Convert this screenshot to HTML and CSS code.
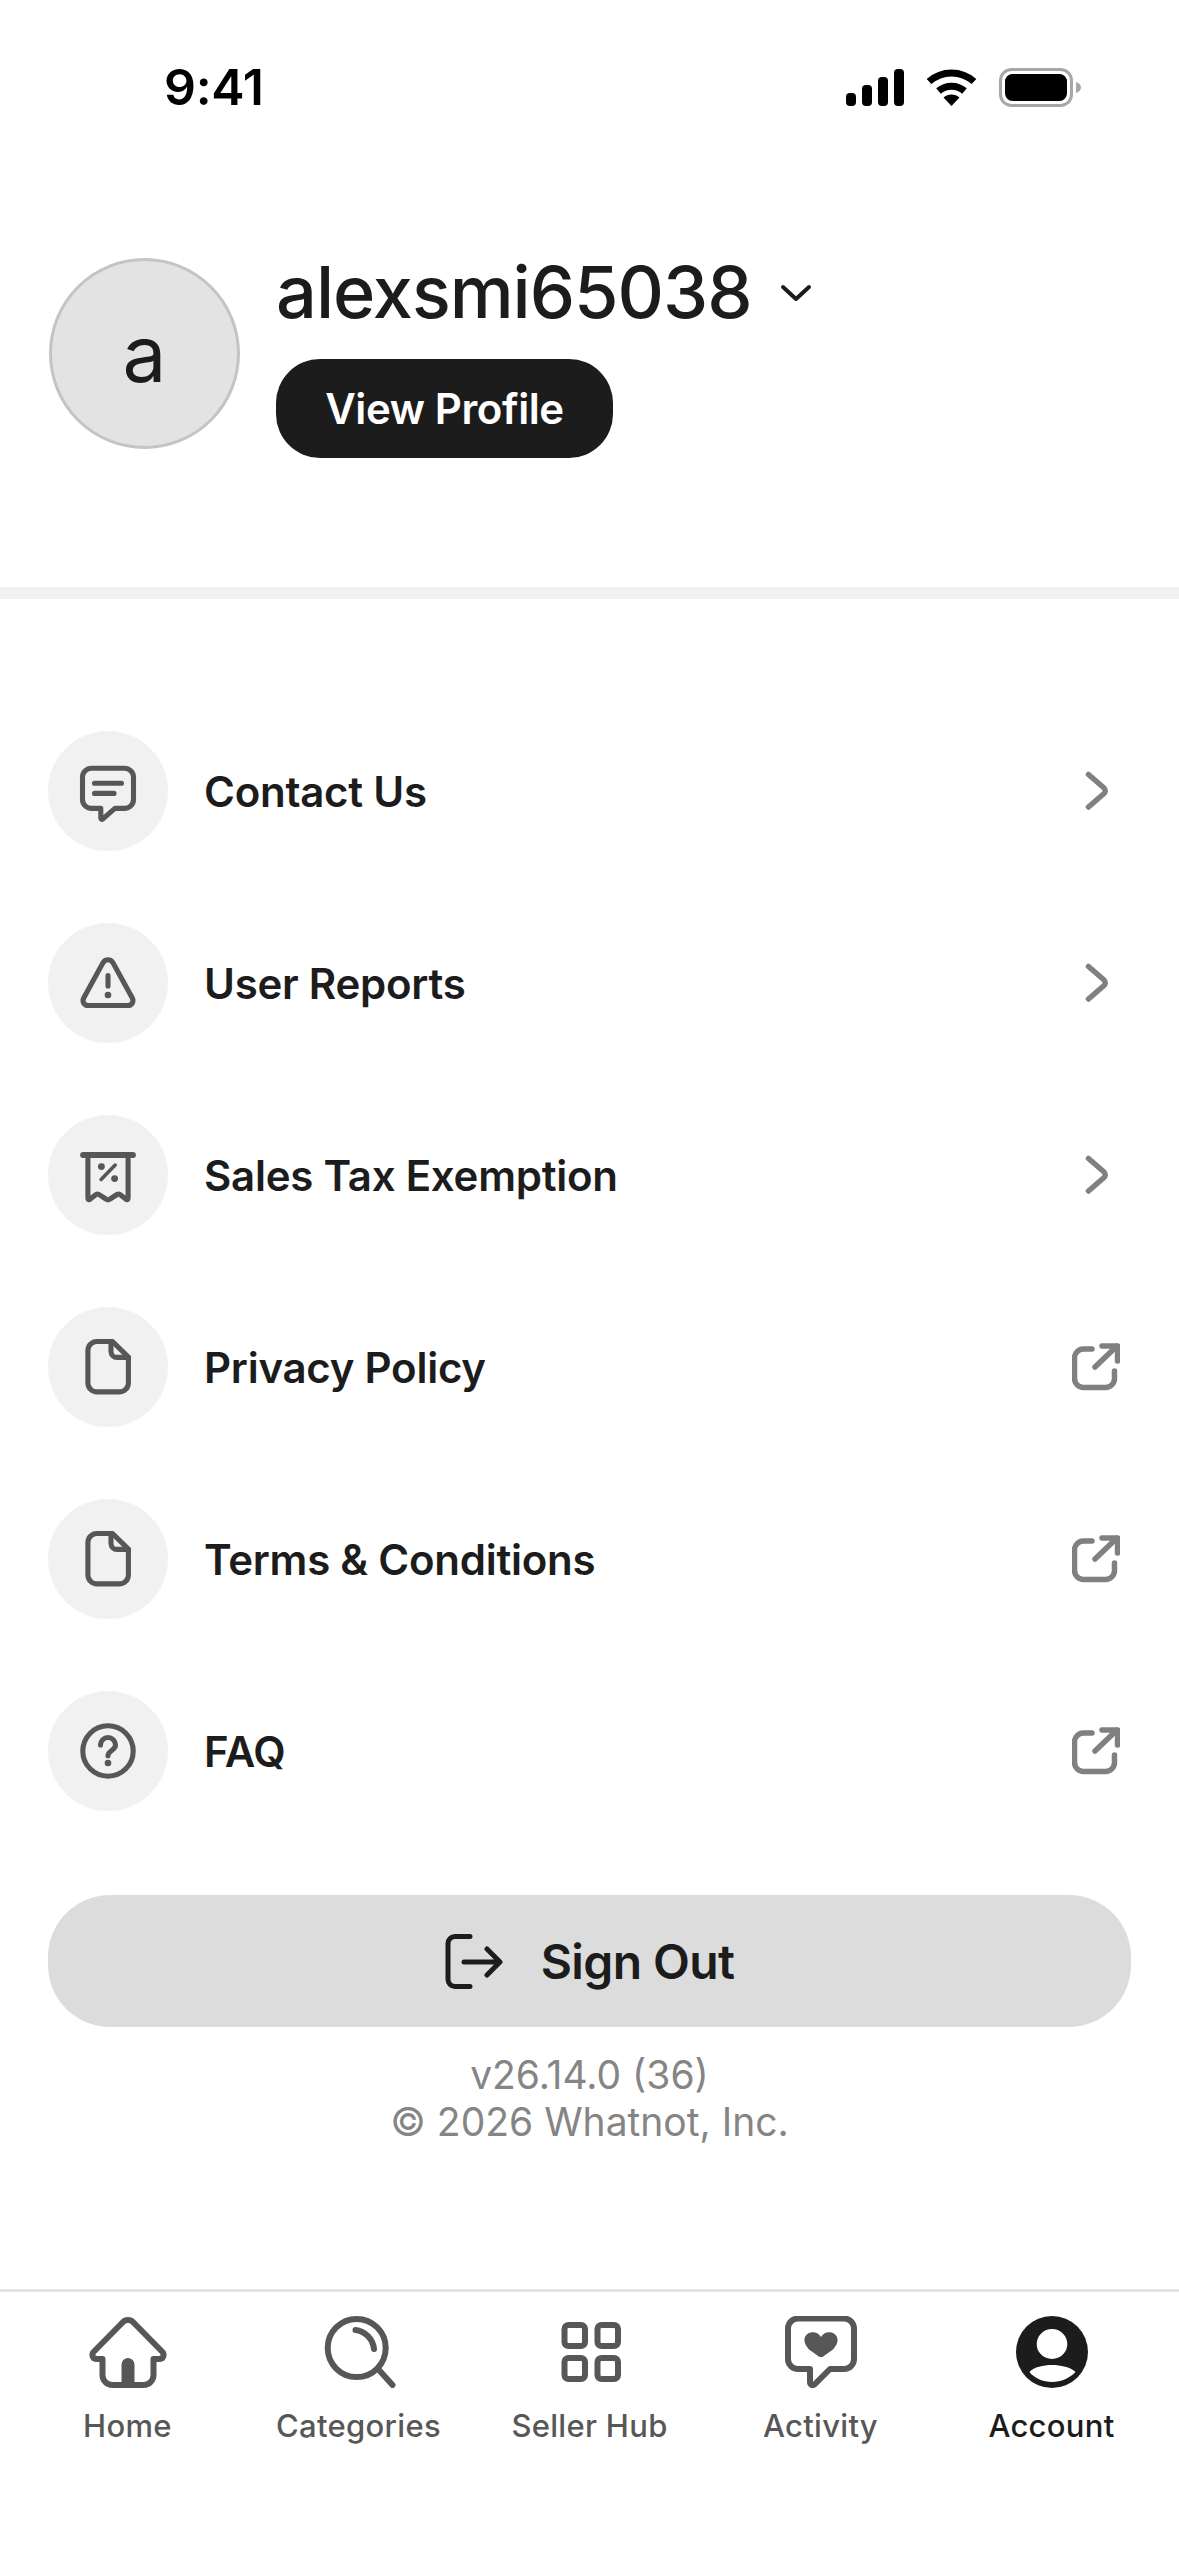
FILE: index.html
```html
<!DOCTYPE html>
<html lang="en">
<head>
    <meta charset="UTF-8">
    <meta name="viewport" content="width=device-width, initial-scale=1.0">
    <title>Account</title>
    <link rel="stylesheet" href="styles.css">
</head>
<body>
    <div class="page">
        <!-- Status bar -->
        <header class="status-bar">
            <span class="time">9:41</span>
            <div class="status-icons">
                <svg class="signal" viewBox="0 0 58 37" fill="#000">
                    <rect x="0" y="24" width="10" height="13" rx="4"/>
                    <rect x="16" y="16" width="10" height="21" rx="4"/>
                    <rect x="32" y="8" width="10" height="29" rx="4"/>
                    <rect x="48" y="0" width="10" height="37" rx="4"/>
                </svg>
                <svg class="wifi" viewBox="0 0 51 38" fill="none" stroke="#000">
                    <path d="M3 13.5C16 2 35 2 48 13.5" stroke-width="7"/>
                    <path d="M12.5 23C20 16.5 31 16.5 38.500 23" stroke-width="7"/>
                    <path d="M17.500 29.500C22 25.500 29 25.500 33.500 29.500L25.500 38Z" fill="#000" stroke="none"/>
                </svg>
                <svg class="battery" viewBox="0 0 82 39" fill="none">
                    <rect x="1.500" y="1.500" width="71" height="36" rx="11" stroke="#a6a6a6" stroke-width="3"/>
                    <rect x="6" y="6" width="62" height="27" rx="7.500" fill="#000"/>
                    <path d="M77 14C80 15 82 17 82 19.500C82 22 80 24 77 25Z" fill="#a6a6a6"/>
                </svg>
            </div>
        </header>

        <!-- Profile -->
        <section class="profile">
            <div class="avatar">a</div>
            <div class="profile-info">
                <div class="username">
                    <span>alexsmi65038</span>
                    <svg class="caret" viewBox="0 0 32 18" fill="none" stroke="#1c1c1c" stroke-width="4" stroke-linecap="round" stroke-linejoin="round">
                        <path d="M3 3L16 15L29 3"/>
                    </svg>
                </div>
                <button class="view-profile">View Profile</button>
            </div>
        </section>

        <div class="divider"></div>

        <!-- Menu -->
        <ul class="menu">
            <li class="menu-row">
                <span class="menu-icon">
                    <svg viewBox="0 0 24 24">
                        <path d="M6.500 4.400H17.500A3 3 0 0 1 20.500 7.400V14.800A3 3 0 0 1 17.500 17.800H14.300L10.300 21.300C9.900 21.600 9.600 21.400 9.600 21V17.800H6.500A3 3 0 0 1 3.500 14.800V7.400A3 3 0 0 1 6.500 4.400Z"/>
                        <path d="M7.500 9.400H16.500M7.500 12.800H14"/>
                    </svg>
                </span>
                <span class="menu-label">Contact Us</span>
                <span class="menu-end">
                    <svg viewBox="0 0 48 48"><path d="M16.500 7.500L31.500 20.500Q35 24 31.500 27L16.500 40"/></svg>
                </span>
            </li>
            <li class="menu-row">
                <span class="menu-icon">
                    <svg viewBox="0 0 24 24">
                        <path d="M10.300 5.300C11.100 3.900 12.900 3.900 13.700 5.300L20.100 17C20.700 18.200 20 19.500 18.600 19.500H5.400C4 19.500 3.300 18.200 3.900 17Z"/>
                        <path d="M12 9.500V13"/>
                        <circle class="dot" cx="12" cy="16" r="1.100"/>
                    </svg>
                </span>
                <span class="menu-label">User Reports</span>
                <span class="menu-end">
                    <svg viewBox="0 0 48 48"><path d="M16.500 7.500L31.500 20.500Q35 24 31.500 27L16.500 40"/></svg>
                </span>
            </li>
            <li class="menu-row">
                <span class="menu-icon">
                    <svg viewBox="0 0 24 24">
                        <path class="bar" d="M3.700 5.300H20.300"/>
                        <path d="M5.300 5.300V19.800C5.300 20.200 5.700 20.300 6 20.100L8 18.500C8.300 18.300 8.700 18.300 9 18.500L11.300 20C11.700 20.300 12.300 20.300 12.700 20L15 18.500C15.300 18.300 15.700 18.300 16 18.500L18 20.100C18.300 20.300 18.700 20.200 18.700 19.800V5.300"/>
                        <path class="thin" d="M9.700 13.500L14.400 8.700"/>
                        <circle class="dot" cx="9.800" cy="9.200" r="1.150"/>
                        <circle class="dot" cx="14.200" cy="13.200" r="1.150"/>
                    </svg>
                </span>
                <span class="menu-label">Sales Tax Exemption</span>
                <span class="menu-end">
                    <svg viewBox="0 0 48 48"><path d="M16.500 7.500L31.500 20.500Q35 24 31.500 27L16.500 40"/></svg>
                </span>
            </li>
            <li class="menu-row">
                <span class="menu-icon">
                    <svg viewBox="0 0 24 24">
                        <path d="M8.300 3.500H13.500L18.800 8.700V17.300A3 3 0 0 1 15.800 20.300H8.300A3 3 0 0 1 5.300 17.300V6.500A3 3 0 0 1 8.300 3.500Z"/>
                        <path d="M13 3.600V6.800A2 2 0 0 0 15 8.800H18.800"/>
                    </svg>
                </span>
                <span class="menu-label">Privacy Policy</span>
                <span class="menu-end">
                    <svg viewBox="0 0 48 48"><path d="M20 6H11.500A9 9 0 0 0 2.500 15V35.500A9 9 0 0 0 11.500 44.500H33.500A9 9 0 0 0 42.500 35.500V28"/><path d="M23 24L45 3M30 3H45.500V18"/></svg>
                </span>
            </li>
            <li class="menu-row">
                <span class="menu-icon">
                    <svg viewBox="0 0 24 24">
                        <path d="M8.300 3.500H13.500L18.800 8.700V17.300A3 3 0 0 1 15.800 20.300H8.300A3 3 0 0 1 5.300 17.300V6.500A3 3 0 0 1 8.300 3.500Z"/>
                        <path d="M13 3.600V6.800A2 2 0 0 0 15 8.800H18.800"/>
                    </svg>
                </span>
                <span class="menu-label">Terms &amp; Conditions</span>
                <span class="menu-end">
                    <svg viewBox="0 0 48 48"><path d="M20 6H11.500A9 9 0 0 0 2.500 15V35.500A9 9 0 0 0 11.500 44.500H33.500A9 9 0 0 0 42.500 35.500V28"/><path d="M23 24L45 3M30 3H45.500V18"/></svg>
                </span>
            </li>
            <li class="menu-row">
                <span class="menu-icon">
                    <svg viewBox="0 0 24 24">
                        <circle cx="12" cy="12" r="8.400"/>
                        <path d="M9.500 10A2.500 2.500 0 0 1 14.500 10C14.500 11.800 12 11.900 12 13.600"/>
                        <circle class="dot" cx="12" cy="16" r="1.100"/>
                    </svg>
                </span>
                <span class="menu-label">FAQ</span>
                <span class="menu-end">
                    <svg viewBox="0 0 48 48"><path d="M20 6H11.500A9 9 0 0 0 2.500 15V35.500A9 9 0 0 0 11.500 44.500H33.500A9 9 0 0 0 42.500 35.500V28"/><path d="M23 24L45 3M30 3H45.500V18"/></svg>
                </span>
            </li>
        </ul>

        <button class="sign-out">
            <svg viewBox="0 0 58 55" fill="none" stroke="#1c1c1c" stroke-width="5" stroke-linecap="round" stroke-linejoin="round">
                <path d="M25 2.500H10A7 7 0 0 0 3 9.500V45.500A7 7 0 0 0 10 52.500H25"/>
                <path d="M19 28H54M42 15L55 28L42 41"/>
            </svg>
            <span>Sign Out</span>
        </button>

        <p class="version">v26.14.0 (36)<br>© 2026 Whatnot, Inc.</p>

        <!-- Tab bar -->
        <nav class="tab-bar">
            <div class="tab">
                <svg viewBox="0 0 80 72">
                    <path d="M34.500 6.500C37.500 3.200 42.500 3.200 45.500 6.500L74 35.500C77 38.500 75.500 43 71 43H65.500V59A10 10 0 0 1 55.500 69H24.500A10 10 0 0 1 14.500 59V43H9C4.500 43 3 38.500 6 35.500Z"/>
                    <path class="solid" d="M33.500 69V48.500A6.500 6.500 0 0 1 46.500 48.500V69Z"/>
                </svg>
                <span>Home</span>
            </div>
            <div class="tab">
                <svg viewBox="0 0 80 72">
                    <ellipse cx="37.700" cy="32" rx="29" ry="29"/>
                    <path d="M60 54L73.500 69"/>
                    <path d="M36.500 14C46 15 54 23 55 33"/>
                </svg>
                <span>Categories</span>
            </div>
            <div class="tab">
                <svg viewBox="0 0 80 72">
                    <rect x="14.500" y="9" width="20.500" height="21" rx="4"/>
                    <rect x="47.500" y="9" width="20.500" height="21" rx="4"/>
                    <rect x="14.500" y="42" width="20.500" height="21" rx="4"/>
                    <rect x="47.500" y="42" width="20.500" height="21" rx="4"/>
                </svg>
                <span>Seller Hub</span>
            </div>
            <div class="tab">
                <svg viewBox="0 0 80 72">
                    <path d="M17 2.500H63A10 10 0 0 1 73 12.500V43A10 10 0 0 1 63 53H49L34 68C32 70 29 69 29 66V53H17A10 10 0 0 1 7 43V12.500A10 10 0 0 1 17 2.500Z"/>
                    <path class="solid" d="M40 21C42 17.500 45.500 15.700 49.500 16.300C54 17 57 20.500 56.500 25C56.200 28 54.500 30.500 52 33.500L43.500 39.500C41.500 41.500 38.500 41.500 36.500 39.500L28 33.500C25.500 30.500 23.800 28 23.500 25C23 20.500 26 17 30.500 16.300C34.500 15.700 38 17.500 40 21Z"/>
                </svg>
                <span>Activity</span>
            </div>
            <div class="tab active">
                <svg viewBox="0 0 80 72">
                    <circle class="solid dark" cx="40" cy="36" r="36"/>
                    <ellipse class="cut" cx="40" cy="28" rx="15.300" ry="15"/>
                    <path class="cut" d="M17.500 56C22 51 31 49 40 49C49 49 58 51 63.500 56C58 62 49 66 40 66C31 66 22 62 17.500 56Z"/>
                </svg>
                <span>Account</span>
            </div>
        </nav>
    </div>
</body>
</html>
```

FILE: styles.css
```css
* {
    margin: 0;
    padding: 0;
    box-sizing: border-box;
}

body, html {
    font-family: Inter, "Noto Sans", sans-serif;
    background: #fff;
    color: #1c1c1c;
}

.page {
    height: 2556px;
    display: flex;
    flex-direction: column;
    overflow: hidden;
}

/* Status bar */
.status-bar {
    height: 174px;
    padding: 0 98px 0 164px;
    display: flex;
    align-items: center;
    justify-content: space-between;
}

.time {
    font-size: 50px;
    font-weight: 600;
    letter-spacing: -0.3px;
    color: #000;
}

.status-icons {
    display: flex;
    align-items: center;
    gap: 22px;
}

.signal {
    width: 58px;
    height: 37px;
}

.wifi {
    width: 51px;
    height: 38px;
}

.battery {
    width: 82px;
    height: 39px;
}

/* Profile */
.profile {
    padding: 75px 0 129px 49px;
    display: flex;
    align-items: center;
    gap: 36px;
}

.avatar {
    width: 191px;
    height: 191px;
    border-radius: 50%;
    background: #e3e3e3;
    border: 3px solid #c4c4c4;
    display: flex;
    align-items: center;
    justify-content: center;
    font-size: 78px;
    color: #1c1c1c;
}

.profile-info {
    display: flex;
    flex-direction: column;
    align-items: flex-start;
    gap: 24px;
}

.username {
    height: 86px;
    display: flex;
    align-items: center;
    gap: 28px;
    font-size: 72px;
    font-weight: 500;
    letter-spacing: -1px;
    line-height: 86px;
}

.caret {
    width: 32px;
    height: 18px;
    margin-top: 2px;
}

.view-profile {
    width: 337px;
    height: 99px;
    border: none;
    border-radius: 44px;
    background: #1c1c1c;
    color: #fff;
    font-family: inherit;
    font-size: 42px;
    font-weight: 600;
    letter-spacing: -0.4px;
}

.divider {
    height: 12px;
    background: #f1f1f1;
}

/* Menu */
.menu {
    list-style: none;
    padding: 132px 59px 0 48px;
    display: flex;
    flex-direction: column;
    gap: 72px;
}

.menu-row {
    height: 120px;
    display: flex;
    align-items: center;
}

.menu-icon {
    width: 120px;
    height: 120px;
    border-radius: 50%;
    background: #f1f1f1;
    display: flex;
    align-items: center;
    justify-content: center;
    margin-right: 36px;
}

.menu-icon svg {
    width: 72px;
    height: 72px;
    fill: none;
    stroke: #575757;
    stroke-width: 1.7;
    stroke-linecap: round;
    stroke-linejoin: round;
}

.menu-icon .dot {
    fill: #575757;
    stroke: none;
}

.menu-icon .thin {
    stroke-width: 1.2;
}

.menu-icon .bar {
    stroke-width: 2;
}

.menu-label {
    flex: 1;
    font-size: 42px;
    font-weight: 600;
    letter-spacing: -0.25px;
}

.menu-end {
    width: 48px;
    height: 48px;
}

.menu-end svg {
    display: block;
    width: 48px;
    height: 48px;
    fill: none;
    stroke: #808080;
    stroke-width: 5.5;
    stroke-linecap: round;
    stroke-linejoin: round;
}

/* Sign out */
.sign-out {
    margin: 84px 48px 0;
    height: 132px;
    border: none;
    border-radius: 62px;
    background: #dcdcdc;
    color: #1c1c1c;
    font-family: inherit;
    font-size: 48px;
    font-weight: 600;
    letter-spacing: -0.6px;
    display: flex;
    align-items: center;
    justify-content: center;
    gap: 38px;
}

.sign-out svg {
    width: 58px;
    height: 55px;
}

.version {
    margin-top: 24px;
    text-align: center;
    font-size: 39px;
    line-height: 47px;
    color: #858585;
}

/* Tab bar */
.tab-bar {
    margin-top: auto;
    height: 267px;
    padding: 24px 12px 0;
    border-top: 3px solid #e4e4e4;
    display: flex;
}

.tab {
    width: 231px;
    display: flex;
    flex-direction: column;
    align-items: center;
    gap: 19px;
    font-size: 31px;
    font-weight: 500;
    letter-spacing: 0.3px;
    line-height: 38px;
    color: #575757;
}

.tab svg {
    width: 80px;
    height: 72px;
    fill: none;
    stroke: #575757;
    stroke-width: 6;
    stroke-linecap: round;
    stroke-linejoin: round;
}

.tab .solid {
    fill: #575757;
    stroke: none;
}

.tab .dark {
    fill: #1c1c1c;
}

.tab .cut {
    fill: #fff;
    stroke: none;
}

.tab.active {
    color: #1c1c1c;
}
```
